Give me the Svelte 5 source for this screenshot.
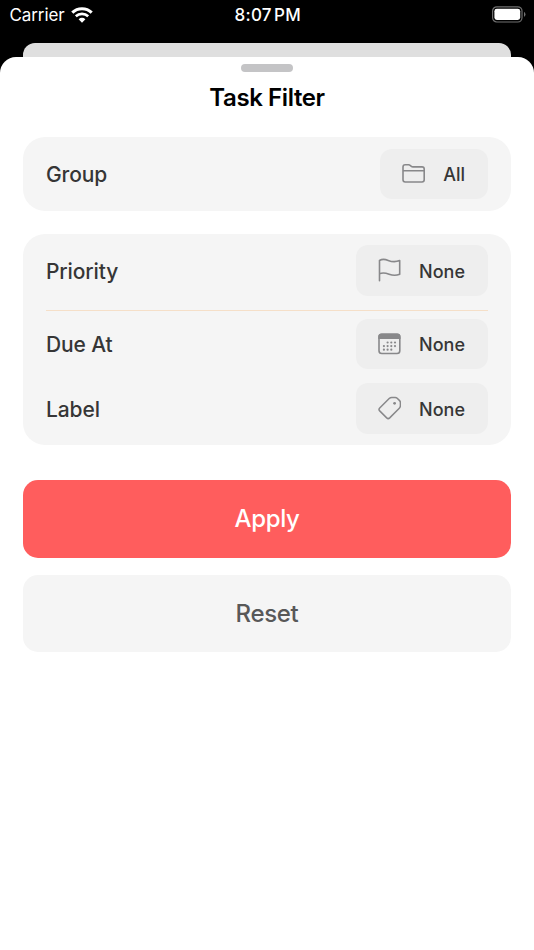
<script lang="ts">
  let group = $state("All");
  let priority = $state("None");
  let dueAt = $state("None");
  let label = $state("None");

  const dots = [
    [9.6, 9.5], [13.3, 9.5], [17, 9.5],
    [5.9, 13.1], [9.6, 13.1], [13.3, 13.1], [17, 13.1],
    [5.9, 16.7], [9.6, 16.7], [13.3, 16.7],
  ];

  function reset() {
    group = "All";
    priority = dueAt = label = "None";
  }
</script>

<div class="screen">
  <div class="status-bar">
    <div class="carrier">
      <span class="carrier-name">Carrier</span>
      <svg class="wifi" width="22" height="16" viewBox="0 0 22 16" fill="none">
        <path d="M1.3 5.6C6.7.5 15.3.5 20.7 5.6" stroke="#fff" stroke-width="3.1" />
        <path d="M4.8 9.2C8.3 6.1 13.7 6.1 17.2 9.2" stroke="#fff" stroke-width="2.7" />
        <path d="M7.6 12.2C9.6 10.4 12.4 10.4 14.4 12.2L11 15.7Z" fill="#fff" />
      </svg>
    </div>
    <span class="time">8:07 PM</span>
    <svg class="battery" width="35" height="17" viewBox="0 0 35 17" fill="none">
      <rect x="1.6" y=".8" width="29.4" height="15.2" rx="4.2" stroke="#707070" stroke-width="1.2" />
      <rect x="3.4" y="2.8" width="25.8" height="11.2" rx="2.4" fill="#fff" />
      <path d="M33 5.8Q36 8.4 33 11Z" fill="#707070" />
    </svg>
  </div>

  <div class="backdrop-card"></div>

  <div class="sheet">
    <div class="grabber"></div>
    <h1>Task Filter</h1>

    <section class="card">
      <div class="row">
        <span class="name">Group</span>
        <button class="pill">
          <svg width="23" height="22" viewBox="0 0 23 22" fill="none" stroke="#88888a" stroke-width="1.6">
            <path d="M1 5V4Q1 1.8 3.2 1.8H6.6Q7.5 1.8 8.2 2.4L9.3 3.3Q10 3.9 10.9 3.9H20Q22.2 3.9 22.2 6.1V16.8Q22.2 19 20 19H3.2Q1 19 1 16.8ZM1 7.8H22.2" />
          </svg>
          <span class="value">{group}</span>
        </button>
      </div>
    </section>

    <section class="card">
      <div class="row">
        <span class="name">Priority</span>
        <button class="pill">
          <svg width="23" height="24" viewBox="0 0 23 24" fill="none" stroke="#88888a" stroke-width="1.6" stroke-linecap="round" stroke-linejoin="round">
            <path d="M1.5 22.8V2.5C4 1 7.4 1.3 10.2 2.4C13.4 3.7 17.5 4.2 21.7 2.6V16.2C17.9 17.8 14.3 17.4 11.1 16.2C8 15 4.6 14.4 1.5 15.7" />
          </svg>
          <span class="value">{priority}</span>
        </button>
      </div>
      <hr />
      <div class="row">
        <span class="name">Due At</span>
        <button class="pill">
          <svg width="23" height="22" viewBox="0 0 23 22" fill="none">
            <rect x="1" y="1.3" width="20.8" height="19.2" rx="2.8" stroke="#88888a" stroke-width="1.6" />
            <path d="M.3 6V3.8Q.3.5 3.6.5H19.2Q22.5.5 22.5 3.8V6Z" fill="#88888a" />
            {#each dots as [cx, cy]}
              <circle {cx} {cy} r="1.1" fill="#88888a" />
            {/each}
          </svg>
          <span class="value">{dueAt}</span>
        </button>
      </div>
      <div class="row label-row">
        <span class="name">Label</span>
        <button class="pill">
          <svg width="23" height="24" viewBox="0 0 23 24" fill="none" stroke="#88888a" stroke-width="1.5" stroke-linejoin="round">
            <path d="M1.7 12L11.2 2.5Q12.3 1.4 13.8 1.4H17.2Q18.4 1.4 19.2 2.2L21.6 4.6Q22.4 5.4 22.4 6.6V9.7Q22.4 11.2 21.3 12.3L11.7 21.9Q10.2 23.3 8.7 21.9L1.7 14.9Q.3 13.4 1.7 12Z" />
            <circle cx="16.6" cy="7.3" r="1.4" fill="#88888a" stroke="none" />
          </svg>
          <span class="value">{label}</span>
        </button>
      </div>
    </section>

    <button class="action apply">Apply</button>
    <button class="action reset" onclick={reset}>Reset</button>
  </div>
</div>

<style>
  :global(body) {
    margin: 0;
    background: #000;
  }

  .screen {
    display: flex;
    flex-direction: column;
    height: 950px;
    overflow: hidden;
    background: #000;
    font-family: Inter, "Liberation Sans", sans-serif;
  }

  .status-bar {
    display: grid;
    grid-template-columns: 1fr auto 1fr;
    align-items: center;
    box-sizing: border-box;
    height: 30px;
    margin-bottom: 13px;
    padding: 0 8px 0 9.5px;
    color: #fff;
    font-size: 17px;
  }

  .carrier {
    display: flex;
    align-items: center;
    gap: 6px;
  }

  .carrier-name {
    letter-spacing: -0.1px;
  }

  .time {
    font-weight: 500;
    letter-spacing: 0.25px;
    word-spacing: -2.5px;
  }

  .battery {
    justify-self: end;
    margin-top: -2px;
  }

  .backdrop-card {
    flex: none;
    height: 14px;
    margin: 0 23px;
    border-radius: 12px 12px 0 0;
    background: #dfdfdf;
  }

  .sheet {
    flex: 1;
    padding: 7px 23px 0;
    border-radius: 16px 16px 0 0;
    background: #fff;
  }

  .grabber {
    width: 52px;
    height: 7.5px;
    margin: 0 auto;
    border-radius: 4px;
    background: #c4c4c6;
  }

  h1 {
    height: 51px;
    margin: 0 0 14.5px;
    color: #000;
    font-size: 24px;
    font-weight: 600;
    letter-spacing: -0.4px;
    line-height: 51px;
    text-align: center;
  }

  .card {
    box-sizing: border-box;
    margin-bottom: 23px;
    padding: 11.5px 23px;
    border-radius: 22px;
    background: #f5f5f5;
  }

  .row {
    display: flex;
    align-items: center;
    justify-content: space-between;
    height: 50.5px;
  }

  .label-row {
    margin-top: 14px;
  }

  .name {
    padding-top: 2px;
    color: #363636;
    font-size: 21px;
    font-weight: 500;
    letter-spacing: -0.12px;
  }

  hr {
    height: 1px;
    margin: 14px 0 8px;
    border: 0;
    background: #f5dfc8;
  }

  button {
    border: 0;
    font-family: inherit;
  }

  .pill {
    display: flex;
    align-items: center;
    gap: 18.5px;
    height: 100%;
    padding: 0 23px 0 21.5px;
    border-radius: 12px;
    background: #eee;
  }

  .value {
    padding-top: 1.5px;
    color: #363636;
    font-size: 18px;
    font-weight: 500;
  }

  .action {
    display: block;
    width: 100%;
    height: 77.5px;
    border-radius: 15px;
    font-size: 24px;
    font-weight: 500;
    letter-spacing: -0.35px;
  }

  .apply {
    margin: 35px 0 17px;
    background: #ff5d5d;
    color: #fff;
  }

  .reset {
    background: #f5f5f5;
    color: #585858;
  }
</style>
